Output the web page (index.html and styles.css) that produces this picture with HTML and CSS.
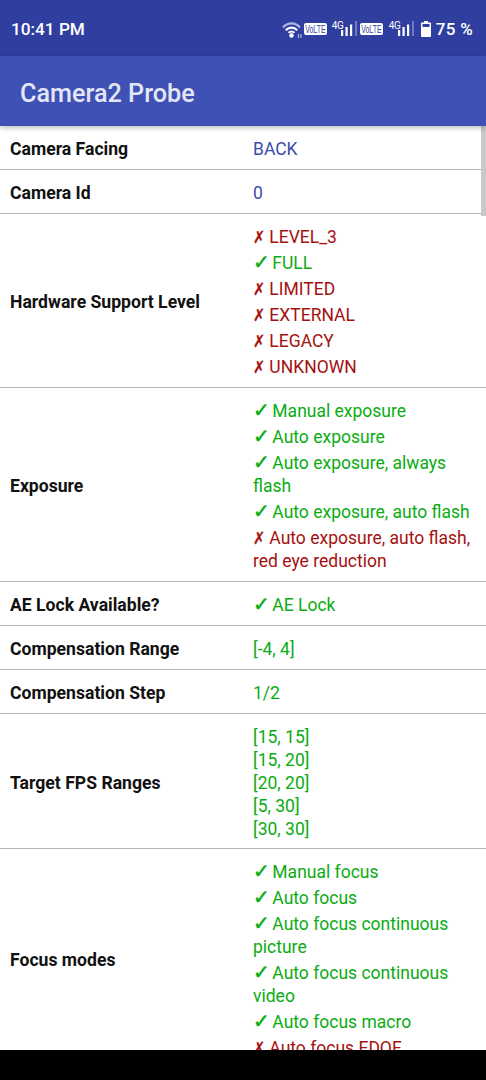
FILE: index.html
```html
<!DOCTYPE html>
<html lang="en">
<head>
<meta charset="utf-8">
<title>Camera2 Probe</title>
<link rel="stylesheet" href="styles.css">
</head>
<body>
<div class="screen">
  <header class="status-bar">
    <span class="clock">10:41 PM</span>
    <div class="status-icons">
      <svg class="wifi" width="22" height="17" viewBox="0 0 22 17"><path d="M1 6.500 C5.500 1 13.500 1 18 6.500" fill="none" stroke="#aeb6e0" stroke-width="2.200"/><path d="M3.800 9.200 C7 5.800 12 5.800 15.200 9.200" fill="none" stroke="#fff" stroke-width="2.200"/><path d="M6.500 11.800 C8.200 10.300 10.800 10.300 12.500 11.800" fill="none" stroke="#fff" stroke-width="2"/><circle cx="9.500" cy="14.500" r="2.200" fill="#fff"/><path d="M16.500 13v4M19 13v4" stroke="#aeb6e0" stroke-width="1.200"/></svg>
      <span class="volte"><span class="volte-text">VoLTE</span></span>
      <span class="net first">4G</span>
      <svg class="bars" width="16" height="16" viewBox="0 0 16 16"><path d="M0 9h2.200v6H0zM4.500 6h2.200v9H4.500zM9 3.500h2.200V15H9z" fill="#fff"/><path d="M14 0h2v15h-2z" fill="#6f7bc0"/></svg>
      <span class="volte second"><span class="volte-text">VoLTE</span></span>
      <span class="net">4G</span>
      <svg class="bars" width="16" height="16" viewBox="0 0 16 16"><path d="M0 9h2.200v6H0zM4.500 6h2.200v9H4.500zM9 3.500h2.200V15H9z" fill="#fff"/><path d="M14 0h2v15h-2z" fill="#6f7bc0"/></svg>
      <svg class="battery" width="10" height="16" viewBox="0 0 10 16"><path d="M3 0h4v1.500h2.500a.5.5 0 0 1 .5.5v13a1 1 0 0 1-1 1H1a1 1 0 0 1-1-1V2a.5.5 0 0 1 .5-.5H3z" fill="#fff"/><rect x="1.500" y="3" width="7" height="3" fill="#303f9f"/></svg>
      <span class="percent">75 %</span>
    </div>
  </header>
  <div class="app-bar">Camera2 Probe</div>
  <main class="content">
    <div class="scrollbar"></div>
    <section class="row">
      <div class="label">Camera Facing</div>
      <div class="value blue">BACK</div>
    </section>
    <section class="row">
      <div class="label">Camera Id</div>
      <div class="value blue">0</div>
    </section>
    <section class="row">
      <div class="label">Hardware Support Level</div>
      <ul class="value list">
        <li class="no"><span class="cross">✗</span> LEVEL_3</li>
        <li class="yes"><span class="check">✓</span> FULL</li>
        <li class="no"><span class="cross">✗</span> LIMITED</li>
        <li class="no"><span class="cross">✗</span> EXTERNAL</li>
        <li class="no"><span class="cross">✗</span> LEGACY</li>
        <li class="no"><span class="cross">✗</span> UNKNOWN</li>
      </ul>
    </section>
    <section class="row">
      <div class="label">Exposure</div>
      <ul class="value list">
        <li class="yes"><span class="check">✓</span> Manual exposure</li>
        <li class="yes"><span class="check">✓</span> Auto exposure</li>
        <li class="yes"><span class="check">✓</span> Auto exposure, always flash</li>
        <li class="yes"><span class="check">✓</span> Auto exposure, auto flash</li>
        <li class="no"><span class="cross">✗</span> Auto exposure, auto flash, red eye reduction</li>
      </ul>
    </section>
    <section class="row">
      <div class="label">AE Lock Available?</div>
      <ul class="value list">
        <li class="yes"><span class="check">✓</span> AE Lock</li>
      </ul>
    </section>
    <section class="row">
      <div class="label">Compensation Range</div>
      <div class="value yes">[-4, 4]</div>
    </section>
    <section class="row">
      <div class="label">Compensation Step</div>
      <div class="value yes">1/2</div>
    </section>
    <section class="row">
      <div class="label">Target FPS Ranges</div>
      <div class="value ranges yes">[15, 15]<br>[15, 20]<br>[20, 20]<br>[5, 30]<br>[30, 30]</div>
    </section>
    <section class="row">
      <div class="label">Focus modes</div>
      <ul class="value list">
        <li class="yes"><span class="check">✓</span> Manual focus</li>
        <li class="yes"><span class="check">✓</span> Auto focus</li>
        <li class="yes"><span class="check">✓</span> Auto focus continuous picture</li>
        <li class="yes"><span class="check">✓</span> Auto focus continuous video</li>
        <li class="yes"><span class="check">✓</span> Auto focus macro</li>
        <li class="no"><span class="cross">✗</span> Auto focus EDOF</li>
      </ul>
    </section>
  </main>
  <div class="nav-bar"></div>
</div>
</body>
</html>
```
FILE: styles.css
```css
* { box-sizing: border-box; }
html, body { margin: 0; padding: 0; background: #000; }
body { font-family: Roboto, "Liberation Sans", sans-serif; }
.screen {
  width: 486px;
  height: 1080px;
  display: flex;
  flex-direction: column;
  overflow: hidden;
  background: #fff;
}
.status-bar {
  flex: 0 0 56px;
  background: #303f9f;
  color: #fff;
  display: flex;
  align-items: center;
  justify-content: space-between;
  padding: 2px 13px 0 11px;
}
.clock { font-size: 17.2px; font-weight: 500; }
.status-icons { display: flex; align-items: center; }
.volte {
  background: #fff;
  color: #303f9f;
  height: 12px;
  width: 23px;
  border-radius: 2px;
  display: flex;
  justify-content: center;
  align-items: center;
}
.volte-text {
  flex: none;
  font-family: "Liberation Sans", sans-serif;
  font-size: 10.5px;
  line-height: 12px;
  transform: scaleX(0.66);
}
.volte.second { margin-left: 3px; }
.net {
  font-size: 10px;
  line-height: 10px;
  width: 9px;
  margin-left: 6px;
  align-self: flex-start;
  margin-top: 2px;
  letter-spacing: -0.3px;
  white-space: nowrap;
}
.net.first { margin-left: 5px; }
.battery { margin-left: 7px; }
.percent { font-size: 17px; font-weight: 500; margin-left: 5px; letter-spacing: 0.3px; }
.app-bar {
  flex: 0 0 70px;
  display: flex;
  align-items: center;
  background: #3f51b5;
  color: #e3e6f5;
  font-size: 25.2px;
  font-weight: 500;
  padding: 4px 0 0 20px;
  position: relative;
  z-index: 2;
  box-shadow: 0 2px 5px rgba(0, 0, 0, 0.25);
}
.content {
  flex: 1 1 0;
  min-height: 0;
  overflow: hidden;
  position: relative;
}
.scrollbar {
  position: absolute;
  top: 0;
  right: 0;
  width: 5px;
  height: 90px;
  background: #c9c9c9;
}
.row {
  display: grid;
  grid-template-columns: 253px 1fr;
  align-items: center;
  border-bottom: 1px solid #b4b4b4;
}
.label {
  padding: 3px 0 0 10px;
  font-size: 17.6px;
  font-weight: 700;
  color: #111;
}
.value {
  margin: 0;
  padding: 12px 10px 8px 0;
  list-style: none;
  font-size: 17.5px;
  line-height: 23px;
}
.value.ranges { padding-bottom: 7px; }
.list { display: flex; flex-direction: column; gap: 3px; }
.blue { color: #3b4cad; }
.yes { color: #0aac12; }
.no { color: #a51010; }
.check, .cross {
  display: inline-block;
  font-family: "DejaVu Sans", sans-serif;
  font-weight: 700;
  line-height: 1;
  vertical-align: baseline;
}
.check { font-size: 20px; width: 15px; -webkit-text-stroke: 0.5px #0aac12; }
.cross {
  font-size: 17px;
  width: 12px;
  transform: scaleX(0.85);
  transform-origin: left center;
  -webkit-text-stroke: 0.3px #a51010;
}
.nav-bar { flex: 0 0 30px; background: #000; position: relative; z-index: 2; }
```
